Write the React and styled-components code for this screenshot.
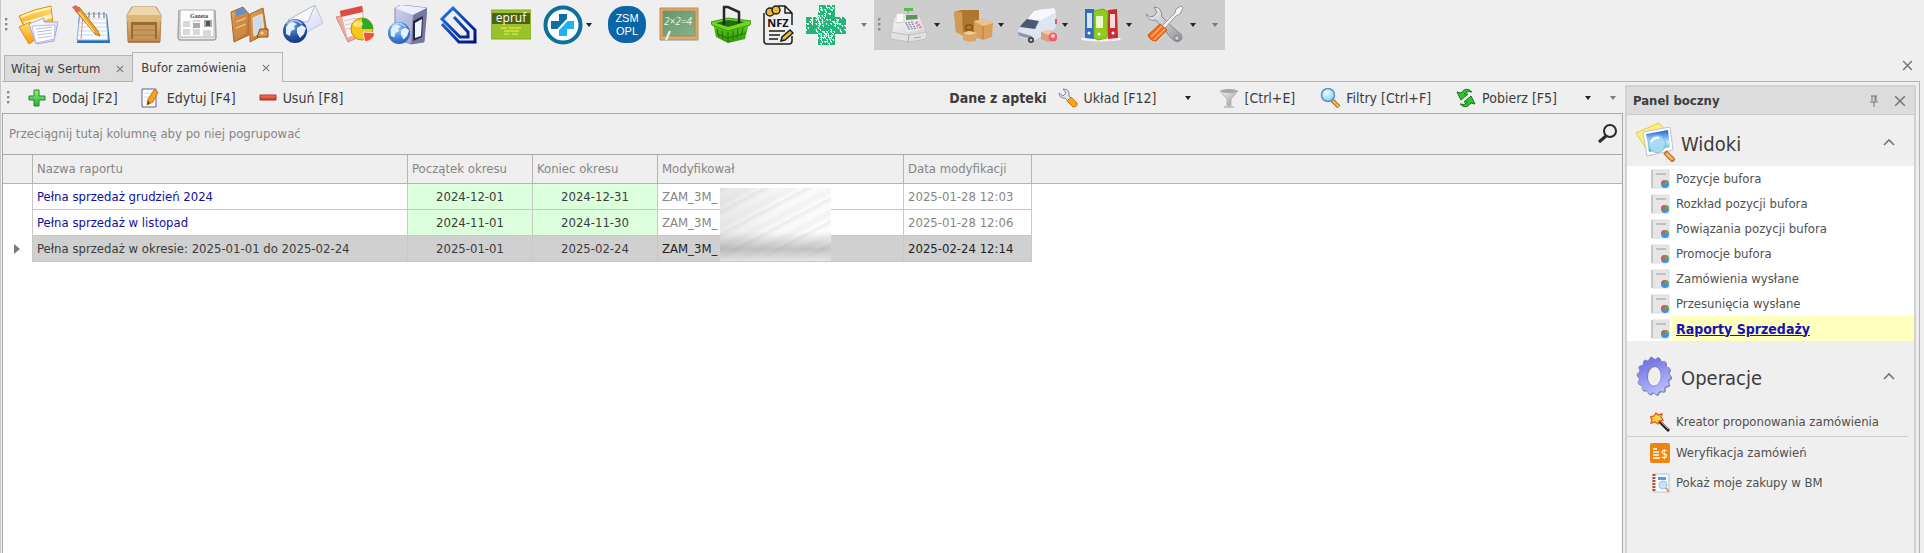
import React from "react";
import styled, { createGlobalStyle, css } from "styled-components";

const color = {
  face: "#efefef",
  line: "#b4b4b4",
  grid: "#c8c8c8",
  text: "#3c3c3c",
  muted: "#868686",
  selected: "#d0d0d0",
  green: "#dcffdc",
  yellow: "#ffffbe",
  navy: "#10109c",
};

const Global = createGlobalStyle`
  *, *::before, *::after { box-sizing: border-box; }
  body {
    margin: 0;
    background: ${color.face};
    color: ${color.text};
    font-family: Tahoma, "DejaVu Sans Condensed", "DejaVu Sans", sans-serif;
    font-size: 13px;
    line-height: 16px;
  }
  button, input { font: inherit; color: inherit; }
`;

const bareButton = css`
  display: flex;
  align-items: center;
  margin: 0;
  padding: 0;
  border: 0;
  background: none;
  white-space: nowrap;
`;

const Page = styled.div`
  min-height: 100vh;
  display: flex;
  flex-direction: column;
  border-left: 1px solid #c8c8c8;
`;

/* ---------- top tool bar ---------- */

const MainToolbar = styled.header`
  display: flex;
  height: 50px;
  padding-left: 4px;
`;

const ToolSection = styled.div`
  display: flex;
  align-items: center;
  gap: 8px;
  margin-left: 4px;
  padding: 0 4px;
  background: #cdcdcd;
`;

const ToolGroup = styled.div`
  display: flex;
  align-items: center;
  gap: ${(p) => p.$gap}px;
  margin-left: ${(p) => p.$start}px;
`;

const ToolButton = styled.button`
  ${bareButton}
  justify-content: center;
  width: ${(p) => p.$width || 40}px;
  height: 50px;
`;

const SplitTool = styled.div`
  display: flex;
`;

const ArrowButton = styled.button`
  ${bareButton}
  justify-content: center;
  width: ${(p) => p.$width || 12}px;
  &::after {
    content: "";
    border: 3px solid transparent;
    border-top: 4px solid ${(p) => (p.$dim ? "#7a7a7a" : "#222")};
    border-bottom: 0;
  }
`;

const Grip = styled.span`
  align-self: center;
  width: 3px;
  height: 14px;
  background: radial-gradient(circle at 1px 1px, #8c8c8c 1px, transparent 2px) 0 0 / 3px 5px;
`;

/* ---------- tabs ---------- */

const TabStrip = styled.nav`
  display: flex;
  align-items: flex-end;
  height: 32px;
  margin: 0 4px 0 1px;
  padding-left: 2px;
  border-bottom: 1px solid ${color.line};
`;

const Tab = styled.div`
  display: flex;
  align-items: center;
  gap: 16px;
  height: ${(p) => (p.$active ? 30 : 26)}px;
  padding: 0 ${(p) => (p.$active ? 12 : 8)}px 0 ${(p) => (p.$active ? 8 : 6)}px;
  margin-bottom: ${(p) => (p.$active ? -1 : 0)}px;
  border: 1px solid ${color.line};
  border-bottom: 0;
  border-right-width: ${(p) => (p.$active ? 1 : 0)}px;
  background: ${(p) => (p.$active ? color.face : "#dcdcdc")};
`;

const TabLabel = styled.button`
  ${bareButton}
`;

const IconButton = styled.button`
  ${bareButton}
  flex: none;
`;

const StripEnd = styled.div`
  margin-left: auto;
  align-self: center;
  padding-right: 7px;
`;

/* ---------- work area ---------- */

const WorkArea = styled.div`
  flex: 1;
  display: flex;
  margin: 0 4px 0 1px;
  border-right: 1px solid ${color.line};
`;

const Document = styled.main`
  flex: 1;
  min-width: 0;
  display: flex;
  flex-direction: column;
`;

const ActionBar = styled.div`
  display: flex;
  align-items: center;
  height: 31px;
  padding: 0 4px 0 5px;
  font-size: 14px;
`;

const ActionGroup = styled.div`
  display: flex;
  align-items: center;
  gap: ${(p) => p.$gap || 23}px;
  margin-left: ${(p) => p.$start || "18px"};
`;

const Action = styled.button`
  ${bareButton}
  gap: 6px;
`;

const Caption = styled.strong`
  font-weight: bold;
  margin-right: -14px;
`;

const GridBox = styled.section`
  flex: 1;
  position: relative;
  border: 1px solid #a8a8a8;
  border-bottom: 0;
  background: #fff;
`;

const GroupPanel = styled.div`
  display: flex;
  align-items: center;
  justify-content: space-between;
  height: 41px;
  padding: 0 4px 0 6px;
  border-bottom: 1px solid #a8a8a8;
  background: ${color.face};
  color: ${color.muted};
`;

const Table = styled.table`
  width: 100%;
  table-layout: fixed;
  border-collapse: separate;
  border-spacing: 0;
`;

const Col = styled.col`
  width: ${(p) => (p.$width ? `${p.$width}px` : "auto")};
`;

const HeadCell = styled.th`
  height: 29px;
  padding: 0 4px;
  border-bottom: 1px solid ${color.line};
  border-right: ${(p) => (p.$last ? 0 : 1)}px solid ${color.line};
  background: ${color.face};
  color: ${color.muted};
  font-weight: normal;
  text-align: left;
`;

const Cell = styled.td`
  height: 26px;
  padding: 0 4px;
  border-right: 1px solid ${color.grid};
  border-bottom: 1px solid ${color.grid};
  color: ${(p) => p.$color || color.text};
  background: ${(p) => (p.$selected ? color.selected : p.$green ? color.green : "#fff")};
  text-align: ${(p) => (p.$center ? "center" : "left")};
  white-space: nowrap;
`;

const MarkCell = styled.td`
  padding-left: 11px;
  border-right: 1px solid ${color.grid};
  svg { display: block; }
`;

const Smudge = styled.div`
  position: absolute;
  left: 717px;
  top: 74px;
  width: 111px;
  height: 73px;
  background:
    linear-gradient(to bottom, transparent 60%, rgba(130, 130, 130, 0.45) 84%, rgba(225, 225, 225, 0.8) 100%),
    repeating-linear-gradient(152deg, rgba(190, 190, 190, 0.18) 0 2px, rgba(255, 255, 255, 0) 5px 9px, rgba(200, 200, 200, 0.14) 12px 15px, rgba(255, 255, 255, 0) 18px 20px),
    linear-gradient(105deg, #e6e6e6, #f8f8f8 50%, #fdfdfd);
`;

/* ---------- side panel ---------- */

const SidePanel = styled.aside`
  flex: none;
  width: 291px;
  margin: 3px 3px 0 2px;
  border: 2px solid #d2d2d2;
  border-bottom: 0;
`;

const PanelTitle = styled.div`
  display: flex;
  align-items: center;
  gap: 15px;
  height: 28px;
  padding: 0 8px 0 6px;
  background: #dcdcdc;
  border-bottom: 1px solid #cdcdcd;
`;

const PanelName = styled.h2`
  flex: 1;
  margin: 0;
  font-size: 13px;
`;

const SectionHead = styled.button`
  ${bareButton}
  width: 100%;
  height: ${(p) => p.$height}px;
  gap: 6px;
  padding: 3px 19px 0 8px;
`;

const SectionName = styled.span`
  flex: 1;
  padding-top: 4px;
  font-size: 20px;
  line-height: 24px;
  text-align: left;
`;

const ViewList = styled.ul`
  margin: 0;
  padding: 0;
  list-style: none;
  background: #fff;
`;

const ViewItem = styled.li`
  display: flex;
  align-items: center;
  height: 25px;
  padding-left: 24px;
`;

const SideLink = styled.a`
  display: flex;
  align-items: center;
  flex: 1;
  height: 25px;
  margin-left: 2px;
  padding-left: 4px;
  color: ${(p) => (p.$current ? "#1414b4" : "#505050")};
  background: ${(p) => (p.$current ? color.yellow : "transparent")};
  font-weight: ${(p) => (p.$current ? "bold" : "normal")};
  font-size: ${(p) => (p.$current ? 14 : 13)}px;
  text-decoration: ${(p) => (p.$current ? "underline" : "none")};
`;

const OperationList = styled(ViewList)`
  background: none;
`;

const OperationItem = styled.li`
  display: flex;
  align-items: center;
  height: 30px;
  padding-left: 23px;
  margin-right: 6px;
  border-bottom: ${(p) => (p.$ruled ? "1px solid #cdcdcd" : 0)};
  margin-bottom: ${(p) => (p.$ruled ? 1 : 0)}px;
`;

/* ---------- drawings ---------- */

const Icon = ({ w = 40, h = 40, box = "0 0 40 40", children }) => (
  <svg width={w} height={h} viewBox={box} fill="none" aria-hidden="true">{children}</svg>
);

const GradientStore = styled.svg`
  position: absolute;
  width: 0;
  height: 0;
`;

const Gradients = () => (
  <GradientStore aria-hidden="true">
    <defs>
      <linearGradient id="gold" x2="0" y2="1"><stop stopColor="#ffe27a" /><stop offset="1" stopColor="#f79a05" /></linearGradient>
      <linearGradient id="wood" x2="0" y2="1"><stop stopColor="#e9c78f" /><stop offset="1" stopColor="#c08c4e" /></linearGradient>
      <linearGradient id="leather" x2="1" y2="1"><stop stopColor="#e5a55c" /><stop offset="1" stopColor="#b86e2a" /></linearGradient>
      <linearGradient id="paper" x2="1" y2="1"><stop stopColor="#fff" /><stop offset="1" stopColor="#d4d8f4" /></linearGradient>
      <radialGradient id="globe" cx=".4" cy=".3" r=".8"><stop stopColor="#6c9fe0" /><stop offset=".5" stopColor="#2858ac" /><stop offset="1" stopColor="#102c78" /></radialGradient>
      <radialGradient id="azure" cx=".4" cy=".3" r=".8"><stop stopColor="#a8d2ff" /><stop offset=".5" stopColor="#4488dd" /><stop offset="1" stopColor="#1d54b4" /></radialGradient>
      <linearGradient id="server" x2="1" y2="1"><stop stopColor="#d0d2ec" /><stop offset="1" stopColor="#9498c4" /></linearGradient>
      <linearGradient id="clip" x2="1" y2="1"><stop stopColor="#1c78f0" /><stop offset="1" stopColor="#00107c" /></linearGradient>
      <linearGradient id="steel" x2="1" y2="1"><stop stopColor="#fafafa" /><stop offset="1" stopColor="#8f949a" /></linearGradient>
      <linearGradient id="silver" x2="1" y2="1"><stop stopColor="#fafafa" /><stop offset="1" stopColor="#d0d0d4" /></linearGradient>
      <linearGradient id="board" x2="1" y2="1"><stop stopColor="#65966b" /><stop offset="1" stopColor="#86b287" /></linearGradient>
      <linearGradient id="basket" x2="0" y2="1"><stop stopColor="#72dc22" /><stop offset="1" stopColor="#2f9408" /></linearGradient>
      <linearGradient id="gear" x2=".4" y2="1"><stop stopColor="#6265d8" /><stop offset="1" stopColor="#b7baff" /></linearGradient>
      <radialGradient id="lens" cx=".4" cy=".3" r=".8"><stop stopColor="#f2fdff" /><stop offset="1" stopColor="#7fc8f0" /></radialGradient>
      <linearGradient id="sky" x2="0" y2="1"><stop stopColor="#1860d8" /><stop offset=".55" stopColor="#bfe8ff" /><stop offset="1" stopColor="#2db0b0" /></linearGradient>
      <linearGradient id="plus" x2="0" y2="1"><stop stopColor="#8ff08a" /><stop offset="1" stopColor="#2dae33" /></linearGradient>
      <linearGradient id="minus" x2="0" y2="1"><stop stopColor="#f58070" /><stop offset="1" stopColor="#cc2f14" /></linearGradient>
    </defs>
  </GradientStore>
);

const FoldersIcon = () => (
  <Icon>
    <path d="M1 11Q16 4 33 1L35 20 8 26Z" fill="url(#gold)" stroke="#e08d08" />
    <path d="M3 12Q16 6 33 3" stroke="#fff3b8" strokeWidth="2" />
    <path d="M5 17 33 9 34 13 8 21Z" fill="#fff6d0" />
    <path d="M1 22 12 17 24 30 11 39Z" fill="url(#gold)" stroke="#e08d08" />
    <path d="M11 19 26 13 26 17 40 17 36 36 18 39Z" fill="url(#paper)" stroke="#a2a7cf" />
    <path d="M14 21l4 17 18-4 1-14Z" fill="#fff" stroke="#b9bee2" />
    <path d="M18 24 34 22M19 27 34 25M19 30 34 28M20 33 34 31" stroke="#b9bee2" />
  </Icon>
);

const NotepadIcon = () => (
  <Icon>
    <path d="M8 9h28l3 29H6Z" fill="#2472bd" />
    <path d="M9 9h26l2 26H6Z" fill="#fafcff" stroke="#9eb3cf" />
    <path d="M9 14h26M9 18h26M8 22h28M8 26h28M7 30h30" stroke="#c5d8ec" />
    <path d="M12 10 10 34" stroke="#ef8888" />
    <path d="M18 7v6M23 7v6M28 7v6M33 7v6" stroke="#949494" strokeWidth="1.5" />
    <path d="m4 5 4-3 19 24 2 5-5-2Z" fill="#f2a425" stroke="#b6711d" />
    <path d="m1 2 4-2 5 5-4 3Z" fill="#dc6758" />
    <path d="m8 7 15 20" stroke="#ffe3a0" strokeWidth="1.2" />
  </Icon>
);

const CrateIcon = () => (
  <Icon>
    <path d="m3 10 5-8h24l5 8-1 27H4Z" fill="url(#wood)" stroke="#b18654" />
    <path d="m3 10 6-8h22l6 8Z" fill="#f0d6a8" />
    <path d="M3 10h34v6H3Z" fill="#dcb67b" />
    <path d="M7 17h26v17H7Z" fill="#9c6b34" />
    <path d="M9 20h22v14H9Z" fill="#c7975b" />
    <path d="M9 25h22M9 30h22" stroke="#ae7c43" />
    <path d="M4 37h32" stroke="#8c5d2c" />
  </Icon>
);

const NewspaperIcon = () => (
  <Icon>
    <path d="M2 6h36l1 26q0 3-3 3H4q-3 0-3-3Z" fill="#e8e8e8" stroke="#a5a5a5" strokeWidth="1.500" />
    <path d="M3 5h34v27H3Z" fill="#fcfcfc" stroke="#b4b4b4" />
    <text x="13" y="13" fontFamily="Liberation Serif, serif" fontSize="6" fontWeight="bold" fill="#444">Gazeta</text>
    <path d="M6 17h7M6 19h7M6 21h7M6 25h7M6 27h7M6 29h7M16 16h7M16 25h7M16 27h7M16 29h7M26 26h8M26 28h8M26 30h8" stroke="#b4b4b4" />
    <path d="M16 18h7v5h-7ZM27 15h8v7h-8Z" fill="#a9a9a9" />
    <path d="M29 16h4v5h-4Z" fill="#555" />
  </Icon>
);

const WalletIcon = () => (
  <Icon>
    <path d="M1 7 13 2l6 7v21L4 37Z" fill="url(#leather)" stroke="#a8662a" />
    <path d="m20 9 13-6 4 25-17 9Z" fill="url(#leather)" stroke="#a8662a" />
    <path d="m5 6 8-4 4 6-11 4Z" fill="#5d93cc" />
    <path d="m4 12 12-4v21L6 33Z" fill="#cf8a42" />
    <path d="m6 17 10-4M6 23l10-4" stroke="#edb878" strokeWidth="1.5" />
    <path d="m23 13 9-4 2 17-10 5Z" fill="#c9dcec" stroke="#f5e5c4" />
    <path d="M30 24h8v8H27Z" fill="#dd914a" stroke="#8b4c16" />
    <circle cx="32" cy="28" r="1.5" fill="#ffe0a0" />
  </Icon>
);

const Globe = ({ cx, cy, r, fill = "url(#globe)" }) => (
  <g transform={`translate(${cx} ${cy}) scale(${r / 12})`}>
    <circle r="12" fill={fill} />
    <path d="M-9-4q3-5 7-5l4 2-3 2 1 3-4 2-1 5-4-2Zm11 1 5-3 4 3-2 6-4 4-3-5Z" fill="#e6f0fb" />
    <path d="M-8-7q7-7 15 0" stroke="#fff" strokeOpacity=".5" strokeWidth="2" />
  </g>
);

const MailGlobeIcon = () => (
  <Icon>
    <path d="m5 15 27-15 8 18-21 12Z" fill="url(#paper)" stroke="#c2c5d6" />
    <path d="m5 15 20 2 7-17Z" fill="#f8f9ff" stroke="#b6bad4" />
    <Globe cx={12} cy={26} r={12} />
  </Icon>
);

const ReportChartIcon = () => (
  <Icon>
    <path d="m1 12 13-3 8 24-9 4Z" fill="#f2a7a2" stroke="#d88780" />
    <path d="M5 6 27 1l3 26-18 6Z" fill="#f8f3f3" stroke="#d6b5b1" />
    <path d="m5 6 22-5 1 6-22 5Z" fill="#dd4c41" />
    <path d="m9 16 12-3M10 20l9-2M11 24l8-1" stroke="#d8c9c8" />
    <circle cx="27" cy="24" r="11" fill="#f6c619" stroke="#c98908" />
    <path d="M27 24V13a11 11 0 0 1 11 11Z" fill="#2fa82e" />
    <path d="m28 27 12 1q-1 7-10 9Z" fill="#ee5138" stroke="#fff" strokeWidth=".8" />
    <ellipse cx="23" cy="19" rx="5" ry="3" fill="#fff2a0" opacity=".7" />
  </Icon>
);

const ServerIcon = () => (
  <Icon>
    <path d="m8 3 6-3 26 3-3 34-13 2-16-6Z" fill="url(#server)" stroke="#8588ae" />
    <path d="m8 3 6-3 26 3-14 7Z" fill="#eeeefc" />
    <path d="m26 10 14-7-3 34-13 2Z" fill="#7478a2" />
    <path d="m26 16 10-5-1 21-9 4Z" fill="#252944" />
    <path d="m28 18 7-4-1 17-6 2Z" fill="#f2f5ff" />
    <Globe cx={12} cy={28} r={11} fill="url(#azure)" />
  </Icon>
);

const ClipIcon = () => (
  <Icon>
    <path d="m3 19 17 18h16V25L14 3 3 14l18 18h8v-5L15 12" stroke="url(#clip)" strokeWidth="3" />
  </Icon>
);

const EprufIcon = () => (
  <Icon>
    <path d="M0 5h40v29H0Z" fill="#9ac22c" stroke="#86ad20" />
    <path d="M1 8h38v11H1Z" fill="#4b6218" />
    <text x="20" y="17" textAnchor="middle" fontFamily="Open Sans, sans-serif" fontSize="12" fill="#fff">epruf</text>
    <path d="M10 23h6m2 0h12M13 26h15m-15 3h5m3 0h6" stroke="#d8e23c" strokeWidth="1.5" />
  </Icon>
);

const MedCrossIcon = () => (
  <Icon>
    <circle cx="20" cy="20" r="17.500" fill="#fff" stroke="#0d6f9c" strokeWidth="4" />
    <path d="M16 9h8v7h7v4L20 24H8v-8h8Z" fill="#0d6f9c" />
    <path d="m25 16h6v8h-7v7h-8v-7Z" fill="#1fb3ef" />
    <path d="m11 29 18-19" stroke="#fff" strokeWidth="2" />
  </Icon>
);

const ZsmIcon = () => (
  <Icon>
    <rect x="1" y="1" width="38" height="37" rx="17" fill="#0b65a6" />
    <g fontFamily="Liberation Sans, sans-serif" fontSize="11" fill="#fff" textAnchor="middle">
      <text x="20" y="17">ZSM</text>
      <text x="20" y="30">OPL</text>
    </g>
  </Icon>
);

const BoardIcon = () => (
  <Icon>
    <path d="M1 3h38v32H1Z" fill="#dba968" stroke="#c08d52" />
    <path d="M4 6h32v25H4Z" fill="url(#board)" stroke="#a9865a" />
    <path d="M1 35h38v1H1Z" fill="#b9c0c4" />
    <text x="5" y="20" fontFamily="Open Sans, sans-serif" fontSize="10" fontStyle="italic" fill="#e9f2e6">2×2=4</text>
    <path d="m7 35 4-9" stroke="#f4f4ee" strokeWidth="2" />
  </Icon>
);

const BasketIcon = () => (
  <Icon>
    <path d="m2 18 17-4 19 4-4 16-17 4L5 32Z" fill="url(#basket)" />
    <path d="m0 17 17-4 23 3-1 4-22 6-16-6Z" fill="#6ed91f" stroke="#319a0b" />
    <path d="m5 18 12-3 17 2-17 5Z" fill="#22690b" />
    <path d="m6 24 2 8m3-6 1 8m5-7v10m5-11v9m5-11-1 9m6-10-2 8M6 29l11 4 18-5" stroke="#257c0a" strokeWidth="1.2" />
    <path d="m13 20V2h4l11 5v11" stroke="#26262e" strokeWidth="2.500" />
  </Icon>
);

const NfzIcon = () => (
  <Icon w={31} box="0 0 31 40">
    <path d="M1 8v28q0 3 3 3h22q3 0 3-3v-5M29 20V8L22 1H15M22 1v7h7" stroke="#1e1e1e" strokeWidth="1.500" />
    <circle cx="7" cy="7" r="4" fill="#efb92f" stroke="#1e1e1e" strokeWidth="1.5" />
    <circle cx="13" cy="5" r="4" fill="#efb92f" stroke="#1e1e1e" strokeWidth="1.5" />
    <text x="15" y="22" textAnchor="middle" fontFamily="Open Sans, sans-serif" fontSize="11" fontWeight="bold" fill="#111">NFZ</text>
    <path d="M6 26h16M6 30h11M6 34h9" stroke="#1e1e1e" strokeWidth="1.5" />
    <path d="m18 36 1-4 8-7 3 3-8 7Z" fill="#efb92f" stroke="#1e1e1e" strokeWidth="1.5" />
  </Icon>
);

/* Speckles of the code-patterned pharmacy cross. */
const speckles = (() => {
  let seed = 11;
  let d = "";
  for (let y = 0; y < 20; y++) {
    for (let x = 0; x < 20; x++) {
      seed = (seed * 1103515 + 12345) % 2147483648;
      const inside = (x > 5 && x < 14) || (y > 5 && y < 14);
      if (inside && (seed >> 8) % 100 < 46) d += `M${x * 2} ${y * 2}h${(seed >> 6) % 2 ? 2 : 1}v2h-1v-1h-1z`;
    }
  }
  return d;
})();

const CodeCrossIcon = () => (
  <Icon>
    <path d="M12 0h17v12h11v17H29v11H12V29H0V12h12Z" fill="#25b377" />
    <path d={speckles} fill="#e9f7f1" />
    <text x="20.500" y="26" textAnchor="middle" fontFamily="Open Sans, sans-serif" fontSize="15" fontWeight="bold" fill="#25b377">S</text>
  </Icon>
);

const RegisterIcon = () => (
  <Icon>
    <path d="M15 3h9v3h-9Z" fill="#56bd4b" /><path d="M18 6h2v5h-2Z" fill="#b0b0b0" />
    <path d="m5 13 4-4h17l5 3 6 12-1 8-34-2Z" fill="url(#silver)" stroke="#c4c4c4" />
    <path d="M17 10h11l1 4-12 1Z" fill="#5d935d" />
    <path d="m7 9 8-1v9l-8 1Z" fill="#fafafa" stroke="#d0d0d0" />
    <path d="m14 18 15-2 5 8-16 3Z" fill="#ececf2" />
    <path d="m16 18 9-1m-8 3 9-1m-8 3 10-1m-9 3 10-1" stroke="#9a9dac" strokeDasharray="2 1" strokeWidth="1.500" />
    <path d="m27 17 5 6" stroke="#ee7e98" strokeWidth="3" strokeDasharray="2 1" />
    <path d="m1 27 18 3 19-3-1 7-17 3-18-3Z" fill="#e2e2e2" stroke="#c0c0c0" />
    <path d="m20 30-1 7M25 33l7-1" stroke="#aaa" />
  </Icon>
);

const BoxesIcon = () => (
  <Icon>
    <path d="m1 7 7-2 18 0v24l-13 2L3 27Z" fill="#c0813a" />
    <path d="m8 5 18 0v22l-16 4Z" fill="#b0752f" /><path d="m1 7 8 0 1 24-7-4Z" fill="#d39a55" />
    <path d="M13 20h6v5h-6Z" stroke="#734817" />
    <path d="m21 16 9-2 10 4-1 14-9 3-9-3Z" fill="#d9a05b" /><path d="m21 16 9-2 10 4-10 3Z" fill="#ecc48a" />
    <path d="M30 21v13" stroke="#b87d3c" />
    <path d="m10 28 6-2 8 2-1 8-6 1-7-2Z" fill="#dda763" /><path d="m10 28 6-2 8 2-7 2Z" fill="#f0cc96" />
  </Icon>
);

const VanIcon = () => (
  <Icon>
    <path d="m6 18 11-12q8-5 20-2l3 3-1 17-21 12-16-3-2-7Z" fill="#dfe5ee" stroke="#c0c7d2" />
    <path d="m17 6 20-3 2 4-20 11-12 1Z" fill="#f6f8fb" />
    <path d="m5 19 5-5 12 2-4 8-15-2Z" fill="#4a5a74" />
    <path d="m1 27 14 4-1 3-12-3Z" fill="#8d97a7" />
    <circle cx="14" cy="35" r="3" fill="#30343c" /><circle cx="14" cy="35" r="1.500" fill="#b9bec6" />
    <path d="m38 14 2 0v5h-2Z" fill="#e85a50" />
    <path d="m24 27 8-2 7 3v7l-8 2-7-3Z" fill="#d8a27c" /><path d="m24 27 8-2 7 3-7 2Z" fill="#f0c9ab" />
    <circle cx="36" cy="32" r="4.500" fill="#ef5d6c" /><circle cx="36" cy="31" r="2" fill="#ffd0d0" />
  </Icon>
);

const BindersIcon = () => (
  <Icon>
    <ellipse cx="20" cy="34" rx="20" ry="2.500" fill="#f4f4f4" />
    <path d="M4 4h9v30l-9-1Z" fill="#2f6cc4" /><path d="M6 8h5v15H6Z" fill="#d5e4f7" />
    <path d="m27 5 9-1 1 29-10 1Z" fill="#c72c33" /><path d="M29 9h5v14h-5Z" fill="#fadcdc" />
    <path d="m13 6 9-2 5 3-1 26-9 2-4-2Z" fill="#8fcc1b" stroke="#73a914" /><path d="M15 11h7v12h-7Z" fill="#eafbc8" />
    <circle cx="8" cy="28" r="1.500" fill="#fff" /><circle cx="18" cy="29" r="1.500" fill="#fff" /><circle cx="32" cy="28" r="1.500" fill="#fff" />
  </Icon>
);

const ToolsIcon = () => (
  <Icon>
    <path d="M1 9q2 8 10 6l16 19q5 5 9 1 3-5-3-8L17 12Q17 2 9 2l3 5-3 4-4 1Z" fill="url(#steel)" stroke="#888d92" />
    <circle cx="32" cy="33" r="2.500" fill="#cdcdcd" stroke="#777" />
    <path d="m17 21 13-13 1-4 5-3 2 2-3 6-4 2-12 13Z" fill="#f4f4f4" stroke="#95999d" />
    <path d="m3 30 12-11 7 6-11 11q-6 0-8-6Z" fill="#f36b1d" stroke="#c9560f" />
    <path d="m6 32 11-11M9 35l11-11" stroke="#ffae70" strokeWidth="1.500" />
  </Icon>
);

const CloseIcon = ({ size = 8 }) => (
  <Icon w={size} h={size} box="0 0 10 10"><path d="m1 1 8 8m0-8-8 8" stroke="#757575" strokeWidth="1.300" /></Icon>
);
const PinIcon = () => (
  <Icon w={10} h={12} box="0 0 10 12"><path d="M2 1h6M3 1v5M7 1v5M6 1v5M1 7h8M5 7v5" stroke="#757575" /></Icon>
);
const ChevronIcon = () => (
  <Icon w={12} h={8} box="0 0 12 8"><path d="m1 7 5-5 5 5" stroke="#757575" strokeWidth="1.600" /></Icon>
);
const SearchIcon = () => (
  <Icon w={20} h={20} box="0 0 20 20"><circle cx="12" cy="7" r="6" stroke="#2a2a2a" strokeWidth="2" /><path d="m8 12-7 6" stroke="#2a2a2a" strokeWidth="3" /></Icon>
);
const PlusIcon = () => (
  <Icon w={18} h={18} box="0 0 18 18"><path d="M6 1h5v6h6v4h-6v6H6v-6H1V7h5Z" fill="url(#plus)" stroke="#22842a" /></Icon>
);
const EditIcon = () => (
  <Icon w={20} h={20} box="0 0 20 20">
    <path d="M1 1h14v18H1Z" fill="#fff" stroke="#565f94" /><path d="M3 5h8M3 9h7M3 13h6" stroke="#cfd6ec" />
    <path d="m6 17 1-6 6-9 4 2-5 10Z" fill="#f6a11c" stroke="#cf7718" /><path d="m6 17 1-4 2 2Z" fill="#333" />
  </Icon>
);
const MinusIcon = () => (
  <Icon w={18} h={18} box="0 0 18 18"><path d="M1 6h16v5H1Z" fill="url(#minus)" stroke="#b33222" /></Icon>
);
const WrenchIcon = () => (
  <Icon w={20} h={20} box="0 0 20 20">
    <path d="M1 5q1 6 6 5l5 5 3-3-4-4q1-7-6-7l3 4-3 3Z" fill="#e2e5ee" stroke="#84889b" />
    <path d="m9 13 4-4 6 6q1 4-4 4Z" fill="#f9a51c" stroke="#c8790c" />
  </Icon>
);
const FunnelIcon = () => (
  <Icon w={20} h={20} box="0 0 20 20">
    <path d="M1 3q9-3 18 0l-7 8v7l-4 0v-7Z" fill="url(#steel)" stroke="#b5b5b5" /><ellipse cx="10" cy="3" rx="8" ry="2" fill="#a8a8a8" />
    <path d="M5 19h10" stroke="#c4c4c4" strokeWidth="2" />
  </Icon>
);
const LensIcon = () => (
  <Icon w={20} h={20} box="0 0 20 20">
    <path d="m12 12 7 7" stroke="#a56616" strokeWidth="4" /><path d="m12 12 7 7" stroke="#f7bd5c" strokeWidth="2" />
    <circle cx="8" cy="7" r="6.500" fill="url(#lens)" stroke="#5293cc" strokeWidth="1.500" />
  </Icon>
);
const RefreshIcon = () => (
  <Icon w={20} h={20} box="0 0 20 20">
    <path d="M16 4Q10-2 5 5L1 4l4 8 7-6-4 0q4-4 8-2Z" fill="#2cc62c" stroke="#17721c" />
    <path d="M4 16q6 6 11-1l4 1-4-8-7 6h4q-4 4-8 2Z" fill="#2cc62c" stroke="#17721c" />
  </Icon>
);
const ViewsIcon = () => (
  <Icon>
    <path d="M1 11 24 1l10 12-18 21Z" fill="#fbf17c" stroke="#dfca4b" />
    <path d="m8 10 27-5 3 23-26 6Z" fill="#fff" stroke="#b9c4d2" />
    <path d="m11 12 22-4 2 17-21 5Z" fill="url(#sky)" />
    <path d="m30 30 9 9" stroke="#ac6920" strokeWidth="5" /><path d="m31 31 7 7" stroke="#f5b75a" strokeWidth="3" />
    <circle cx="22" cy="22" r="8.500" fill="#a9dcf5" fillOpacity=".9" stroke="#8fb6ce" />
    <path d="M16 20q3-5 8-4" stroke="#fff" strokeWidth="2" />
  </Icon>
);

/* Outline of a cogwheel with softly cut teeth and an oval hole. */
const gearPath = (() => {
  const teeth = 14;
  const points = [];
  for (let i = 0; i < teeth * 4; i++) {
    const angle = (i / (teeth * 4)) * Math.PI * 2;
    const k = i % 4 < 2 ? 1 : 0.89;
    points.push(`${(19 + 17 * k * Math.cos(angle)).toFixed(2)} ${(20 + 19 * k * Math.sin(angle)).toFixed(2)}`);
  }
  return `M${points.join("L")}ZM26 20a7 10 0 1 0-14 0a7 10 0 1 0 14 0Z`;
})();

const GearIcon = () => (
  <Icon>
    <path d={gearPath} transform="translate(1 1)" fill="#8a8c98" fillRule="evenodd" />
    <path d={gearPath} fill="url(#gear)" stroke="#7679cc" strokeWidth=".6" strokeLinejoin="round" fillRule="evenodd" />
  </Icon>
);
const ReportIcon = () => (
  <Icon w={19} h={20} box="0 0 19 20">
    <path d="M1 1h17v18H1Z" fill="#e6e6e6" stroke="#dcdcdc" /><path d="M1 1v18" stroke="#c6c6c6" strokeWidth="2" /><path d="M5 5h10" stroke="#c0c0c0" strokeWidth="2" />
    <circle cx="14" cy="15" r="4" fill="#3c94de" /><path d="M14 15h-4a4 4 0 0 1 4-4Z" fill="#dc5848" /><path d="M14 15v-4a4 4 0 0 1 4 4Z" fill="#59ae52" />
  </Icon>
);
const WandIcon = () => (
  <Icon w={20} h={20} box="0 0 20 20">
    <path d="m9 9 10 10" stroke="#2a2420" strokeWidth="3" /><path d="m10 9 8 8" stroke="#999" />
    <path d="m6 1 2 2 4-1-1 3 2 3-4 1-1 3-3-2-4 1 1-4-2-2 4-1Z" fill="#ffd43b" stroke="#e15b26" strokeWidth="1.300" />
  </Icon>
);
const OrderCheckIcon = () => (
  <Icon w={20} h={20} box="0 0 20 20">
    <rect width="20" height="20" rx="2" fill="#ef850f" />
    <path d="M3 6h4M3 9h6M3 12h6M3 15h7" stroke="#fff" strokeWidth="1.500" />
    <text x="11" y="16" fontFamily="Open Sans, sans-serif" fontSize="12" fill="#fff">$</text>
  </Icon>
);
const PurchasesIcon = () => (
  <Icon w={20} h={20} box="0 0 20 20">
    <path d="M3 1h16v18H3Z" fill="#f8fafc" stroke="#b9c6d4" /><path d="M4 1v18" stroke="#b9532c" strokeWidth="3" strokeDasharray="2 1" />
    <path d="M8 4h8v3H8Z" fill="#5c9be0" /><circle cx="13" cy="12" r="4" fill="#c4e2f8" stroke="#9cc4e6" /><path d="m16 15 3 4" stroke="#dda04f" strokeWidth="2" />
  </Icon>
);
const RowMarker = () => (
  <Icon w={6} h={10} box="0 0 6 10"><path d="M0 0 6 5 0 10Z" fill="#7a7a7a" /></Icon>
);

/* ---------- data ---------- */

const firstTools = [
  ["Dokumenty", FoldersIcon], ["Notatnik", NotepadIcon], ["Magazyn", CrateIcon],
  ["Gazetki", NewspaperIcon], ["Portfel", WalletIcon], ["Poczta", MailGlobeIcon],
];
const secondTools = [
  ["Raporty", ReportChartIcon], ["Serwer", ServerIcon], ["Załączniki", ClipIcon], ["epruf", EprufIcon],
];
const thirdTools = [
  ["ZSM OPL", ZsmIcon], ["Szkolenia", BoardIcon], ["Koszyk", BasketIcon], ["NFZ", NfzIcon, 31], ["Apteka", CodeCrossIcon],
];
const splitTools = [
  ["Sprzedaż", RegisterIcon], ["Towary", BoxesIcon], ["Dostawy", VanIcon], ["Ewidencja", BindersIcon], ["Narzędzia", ToolsIcon],
];

const columns = [
  { label: "", width: 30 },
  { label: "Nazwa raportu", width: 375 },
  { label: "Początek okresu", width: 125 },
  { label: "Koniec okresu", width: 125 },
  { label: "Modyfikował", width: 246 },
  { label: "Data modyfikacji", width: 128 },
  { label: "" },
];

const rows = [
  { name: "Pełna sprzedaż grudzień 2024", from: "2024-12-01", to: "2024-12-31", by: "ZAM_3M_", at: "2025-01-28 12:03" },
  { name: "Pełna sprzedaż w listopad", from: "2024-11-01", to: "2024-11-30", by: "ZAM_3M_", at: "2025-01-28 12:06" },
  { name: "Pełna sprzedaż w okresie: 2025-01-01 do 2025-02-24", from: "2025-01-01", to: "2025-02-24", by: "ZAM_3M_", at: "2025-02-24 12:14", selected: true },
];

const views = [
  "Pozycje bufora", "Rozkład pozycji bufora", "Powiązania pozycji bufora", "Promocje bufora",
  "Zamówienia wysłane", "Przesunięcia wysłane", "Raporty Sprzedaży",
];

const operations = [
  { label: "Kreator proponowania zamówienia", Glyph: WandIcon, ruled: true },
  { label: "Weryfikacja zamówień", Glyph: OrderCheckIcon },
  { label: "Pokaż moje zakupy w BM", Glyph: PurchasesIcon },
];

const Tools = ({ items }) =>
  items.map(([label, Glyph, width]) => (
    <ToolButton key={label} aria-label={label} $width={width}><Glyph /></ToolButton>
  ));

function TopTools() {
  return (
    <MainToolbar>
      <Grip />
      <ToolGroup $gap={13} $start={10}><Tools items={firstTools} /></ToolGroup>
      <ToolGroup $gap={12} $start={12}>
        <Tools items={secondTools} />
        <SplitTool>
          <ToolButton aria-label="Recepty"><MedCrossIcon /></ToolButton>
          <ArrowButton aria-label="Recepty, więcej" />
        </SplitTool>
        <Tools items={thirdTools} />
        <ArrowButton aria-label="Opcje paska" $dim />
      </ToolGroup>
      <ToolSection>
        <Grip />
        {splitTools.map(([label, Glyph]) => (
          <SplitTool key={label}>
            <ToolButton aria-label={label}><Glyph /></ToolButton>
            <ArrowButton aria-label={`${label}, więcej`} $width={16} />
          </SplitTool>
        ))}
        <ArrowButton aria-label="Opcje paska" $dim />
      </ToolSection>
    </MainToolbar>
  );
}

function ReportGrid() {
  return (
    <GridBox>
      <GroupPanel>
        <span>Przeciągnij tutaj kolumnę aby po niej pogrupować</span>
        <IconButton aria-label="Szukaj"><SearchIcon /></IconButton>
      </GroupPanel>
      <Table>
        <colgroup>{columns.map((c, i) => <Col key={i} $width={c.width} />)}</colgroup>
        <thead>
          <tr>{columns.map((c, i) => <HeadCell key={i} $last={i === columns.length - 1}>{c.label}</HeadCell>)}</tr>
        </thead>
        <tbody>
          {rows.map((r) => (
            <tr key={r.from}>
              <MarkCell>{r.selected && <RowMarker />}</MarkCell>
              <Cell $selected={r.selected} $color={r.selected ? color.text : color.navy}>{r.name}</Cell>
              <Cell $selected={r.selected} $green $center>{r.from}</Cell>
              <Cell $selected={r.selected} $green $center>{r.to}</Cell>
              <Cell $selected={r.selected} $color={r.selected ? "#222" : color.muted}>{r.by}</Cell>
              <Cell $selected={r.selected} $color={r.selected ? "#222" : color.muted}>{r.at}</Cell>
              <td />
            </tr>
          ))}
        </tbody>
      </Table>
      <Smudge />
    </GridBox>
  );
}

function Side() {
  return (
    <SidePanel>
      <PanelTitle>
        <PanelName>Panel boczny</PanelName>
        <IconButton aria-label="Przypnij"><PinIcon /></IconButton>
        <IconButton aria-label="Zamknij panel"><CloseIcon size={12} /></IconButton>
      </PanelTitle>
      <SectionHead $height={51}><ViewsIcon /><SectionName>Widoki</SectionName><ChevronIcon /></SectionHead>
      <ViewList>
        {views.map((label) => (
          <ViewItem key={label}>
            <ReportIcon />
            <SideLink href="#" $current={label === "Raporty Sprzedaży"}>{label}</SideLink>
          </ViewItem>
        ))}
      </ViewList>
      <SectionHead $height={66}><GearIcon /><SectionName>Operacje</SectionName><ChevronIcon /></SectionHead>
      <OperationList>
        {operations.map(({ label, Glyph, ruled }) => (
          <OperationItem key={label} $ruled={ruled}>
            <Glyph />
            <SideLink href="#">{label}</SideLink>
          </OperationItem>
        ))}
      </OperationList>
    </SidePanel>
  );
}

export default function App() {
  return (
    <>
      <Global />
      <Gradients />
      <Page>
        <TopTools />
        <TabStrip>
          <Tab>
            <TabLabel>Witaj w Sertum</TabLabel>
            <IconButton aria-label="Zamknij Witaj w Sertum"><CloseIcon /></IconButton>
          </Tab>
          <Tab $active>
            <TabLabel>Bufor zamówienia</TabLabel>
            <IconButton aria-label="Zamknij Bufor zamówienia"><CloseIcon /></IconButton>
          </Tab>
          <StripEnd><IconButton aria-label="Zamknij"><CloseIcon size={11} /></IconButton></StripEnd>
        </TabStrip>
        <WorkArea>
          <Document>
            <ActionBar>
              <Grip />
              <ActionGroup>
                <Action><PlusIcon />Dodaj [F2]</Action>
                <Action><EditIcon />Edytuj [F4]</Action>
                <Action><MinusIcon />Usuń [F8]</Action>
              </ActionGroup>
              <ActionGroup $start="auto" $gap={25}>
                <Caption>Dane z apteki</Caption>
                <Action><WrenchIcon />Układ [F12]</Action>
                <ArrowButton aria-label="Układ, więcej" />
                <Action><FunnelIcon />[Ctrl+E]</Action>
                <Action><LensIcon />Filtry [Ctrl+F]</Action>
                <Action><RefreshIcon />Pobierz [F5]</Action>
                <ArrowButton aria-label="Pobierz, więcej" />
              </ActionGroup>
              <ActionGroup $start="13px">
                <ArrowButton aria-label="Opcje paska" $dim />
              </ActionGroup>
            </ActionBar>
            <ReportGrid />
          </Document>
          <Side />
        </WorkArea>
      </Page>
    </>
  );
}
